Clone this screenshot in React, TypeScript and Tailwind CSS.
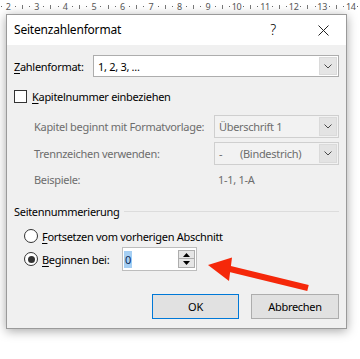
import React from "react";

function Chevron() {
  return (
    <svg width="8" height="5" viewBox="0 0 8 5" className="block">
      <polyline points="0.5,0.5 4,4 7.5,0.5" fill="none" stroke="#4a4a4a" strokeWidth="1" />
    </svg>
  );
}

function Combo({ children, disabled, width }: { children: React.ReactNode; disabled?: boolean; width: string }) {
  return (
    <div
      className={`flex h-full ${width} border ${
        disabled ? "border-[#cfcfcf] bg-[#f2f2f2] text-[#6d6d6d]" : "border-[#adadad] bg-white text-black"
      }`}
    >
      <div className="flex flex-1 items-center pl-[4px] whitespace-nowrap">{children}</div>
      <div
        className={`m-px flex w-[18px] items-center justify-center border ${
          disabled ? "border-[#dadada] bg-[#e3e3e3]" : "border-[#dadada] bg-[#e5e5e5]"
        }`}
      >
        <Chevron />
      </div>
    </div>
  );
}

function U({ children }: { children: React.ReactNode }) {
  return <span className="underline decoration-1 underline-offset-2">{children}</span>;
}

function Radio({ checked }: { checked?: boolean }) {
  return (
    <div className="flex h-[14px] w-[14px] shrink-0 items-center justify-center rounded-full border border-[#333] bg-white">
      {checked && <div className="h-[7px] w-[7px] rounded-full bg-[#333]" />}
    </div>
  );
}

function Ruler() {
  const nums = [2, 3, 4, 5, 6, 7, 8, 9, 10, 11, 12, 13, 14];
  const Dot = () => (
    <span className="flex w-[7.14px] shrink-0 justify-center">
      <span className="block h-px w-px bg-[#666]" />
    </span>
  );
  const Tick = () => (
    <span className="flex w-[7.14px] shrink-0 justify-center">
      <span className="block h-[4px] w-px bg-[#777]" />
    </span>
  );
  return (
    <div className="flex h-[13px] items-center overflow-hidden text-[9px] leading-none text-[#555]">
      <div className="ml-[-2.5px] flex items-center">
        <Dot />
        {nums.map((n) => (
          <div key={n} className="flex w-[28.56px] shrink-0 items-center">
            <span className="flex w-[7.14px] justify-center">{n}</span>
            {n !== 14 && (
              <>
                <Dot />
                <Tick />
                <Dot />
              </>
            )}
            {n === 14 && <Dot />}
          </div>
        ))}
      </div>
    </div>
  );
}

export default function App() {
  return (
    <div className="relative h-[359px] w-[360px] overflow-hidden bg-white font-['Noto_Sans',sans-serif] text-[11px] leading-none tracking-[-0.3px] text-black">
      <Ruler />
      <div className="ml-[6px] mt-px w-[341px] border border-[#9a9a9a] bg-[#f0f0f0] shadow-[0_2px_10px_rgba(0,0,0,0.35)]">
        {/* title bar */}
        <div className="flex h-[30px] items-center bg-white pl-[7px] text-[12px] tracking-[-0.2px]">
          <span className="flex-1">Seitenzahlenformat</span>
          <span className="w-[46px] pr-[8px] text-center text-[14px] font-light">?</span>
          <span className="flex w-[46px] items-center justify-center">
            <svg width="11" height="11" viewBox="0 0 11 11">
              <path d="M0.5 0.5 L10.5 10.5 M10.5 0.5 L0.5 10.5" stroke="#222" strokeWidth="1" />
            </svg>
          </span>
        </div>

        {/* body */}
        <div className="flex flex-col px-[7px] pb-[9px]">
          <div className="mt-[10px] flex h-[22px] items-center">
            <span className="w-[79px]">
              <U>Z</U>ahlenformat:
            </span>
            <Combo width="w-[246px]">1, 2, 3, ...</Combo>
          </div>

          <div className="mt-[13px] flex h-[13px] items-center gap-[5px]">
            <div className="h-[13px] w-[13px] border border-[#333] bg-white" />
            <span>
              <U>K</U>apitelnummer einbeziehen
            </span>
          </div>

          <div className="mt-[12px] flex h-[23px] items-center pl-[20px] text-[#6d6d6d]">
            <span className="flex-1 whitespace-nowrap">Kapitel beginnt mit Formatvorlage:</span>
            <Combo width="w-[125px]" disabled>
              Überschrift 1
            </Combo>
          </div>

          <div className="mt-[4px] flex h-[23px] items-center pl-[20px] text-[#6d6d6d]">
            <span className="flex-1">Trennzeichen verwenden:</span>
            <Combo width="w-[125px]" disabled>
              <span className="w-[21px]">-</span>
              <span>(Bindestrich)</span>
            </Combo>
          </div>

          <div className="mt-[6px] flex h-[16px] items-center pl-[20px] text-[#6d6d6d]">
            <span className="flex-1">Beispiele:</span>
            <span className="w-[125px] pl-[4px]">1-1, 1-A</span>
          </div>

          <div className="mt-[16px] flex h-[16px] items-center">
            <span>Seitennummerierung</span>
            <div className="ml-[4px] h-px flex-1 bg-[#dcdcdc]" />
          </div>

          <div className="mt-[9px] flex h-[16px] items-center gap-[4px] pl-[10px]">
            <Radio />
            <span>
              <U>F</U>ortsetzen vom vorherigen Abschnitt
            </span>
          </div>

          <div className="mt-[3px] flex h-[24px] items-center pl-[10px]">
            <Radio checked />
            <span className="ml-[4px] w-[80px]">
              <U>B</U>eginnen bei:
            </span>
            <div className="flex h-[24px] w-[75px] items-center border border-[#bdbdbd] bg-white pl-px pr-px">
              <div className="flex flex-1 items-center">
                <span className="flex h-[17px] items-center bg-[#a6cff3] px-px text-[#0b2a55]">0</span>
              </div>
              <div className="flex w-[17px] flex-col">
                <div className="flex h-[9px] items-center justify-center border border-[#adadad] bg-[#e5e5e5]">
                  <svg width="7" height="4" viewBox="0 0 7 4">
                    <polygon points="0,4 3.5,0 7,4" fill="#000" />
                  </svg>
                </div>
                <div className="flex h-[9px] items-center justify-center border border-t-0 border-[#adadad] bg-[#e5e5e5]">
                  <svg width="7" height="4" viewBox="0 0 7 4">
                    <polygon points="0,0 3.5,4 7,0" fill="#000" />
                  </svg>
                </div>
              </div>
            </div>
          </div>

          <div className="mt-[23px] flex h-[25px] justify-end gap-[12px]">
            <div className="flex w-[87px] items-center justify-center border border-[#0078d7] bg-[#e1e1e1]">OK</div>
            <div className="flex w-[88px] items-center justify-center border border-[#adadad] bg-[#e1e1e1]">
              Abbrechen
            </div>
          </div>
        </div>
      </div>

      {/* red annotation arrow */}
      <svg className="pointer-events-none absolute left-0 top-0" width="360" height="359" viewBox="0 0 360 359">
        <line x1="308" y1="288" x2="226" y2="268" stroke="#f5280a" strokeWidth="6" />
        <polygon points="208,265 232,257.5 229,281" fill="#f5280a" />
      </svg>
    </div>
  );
}
